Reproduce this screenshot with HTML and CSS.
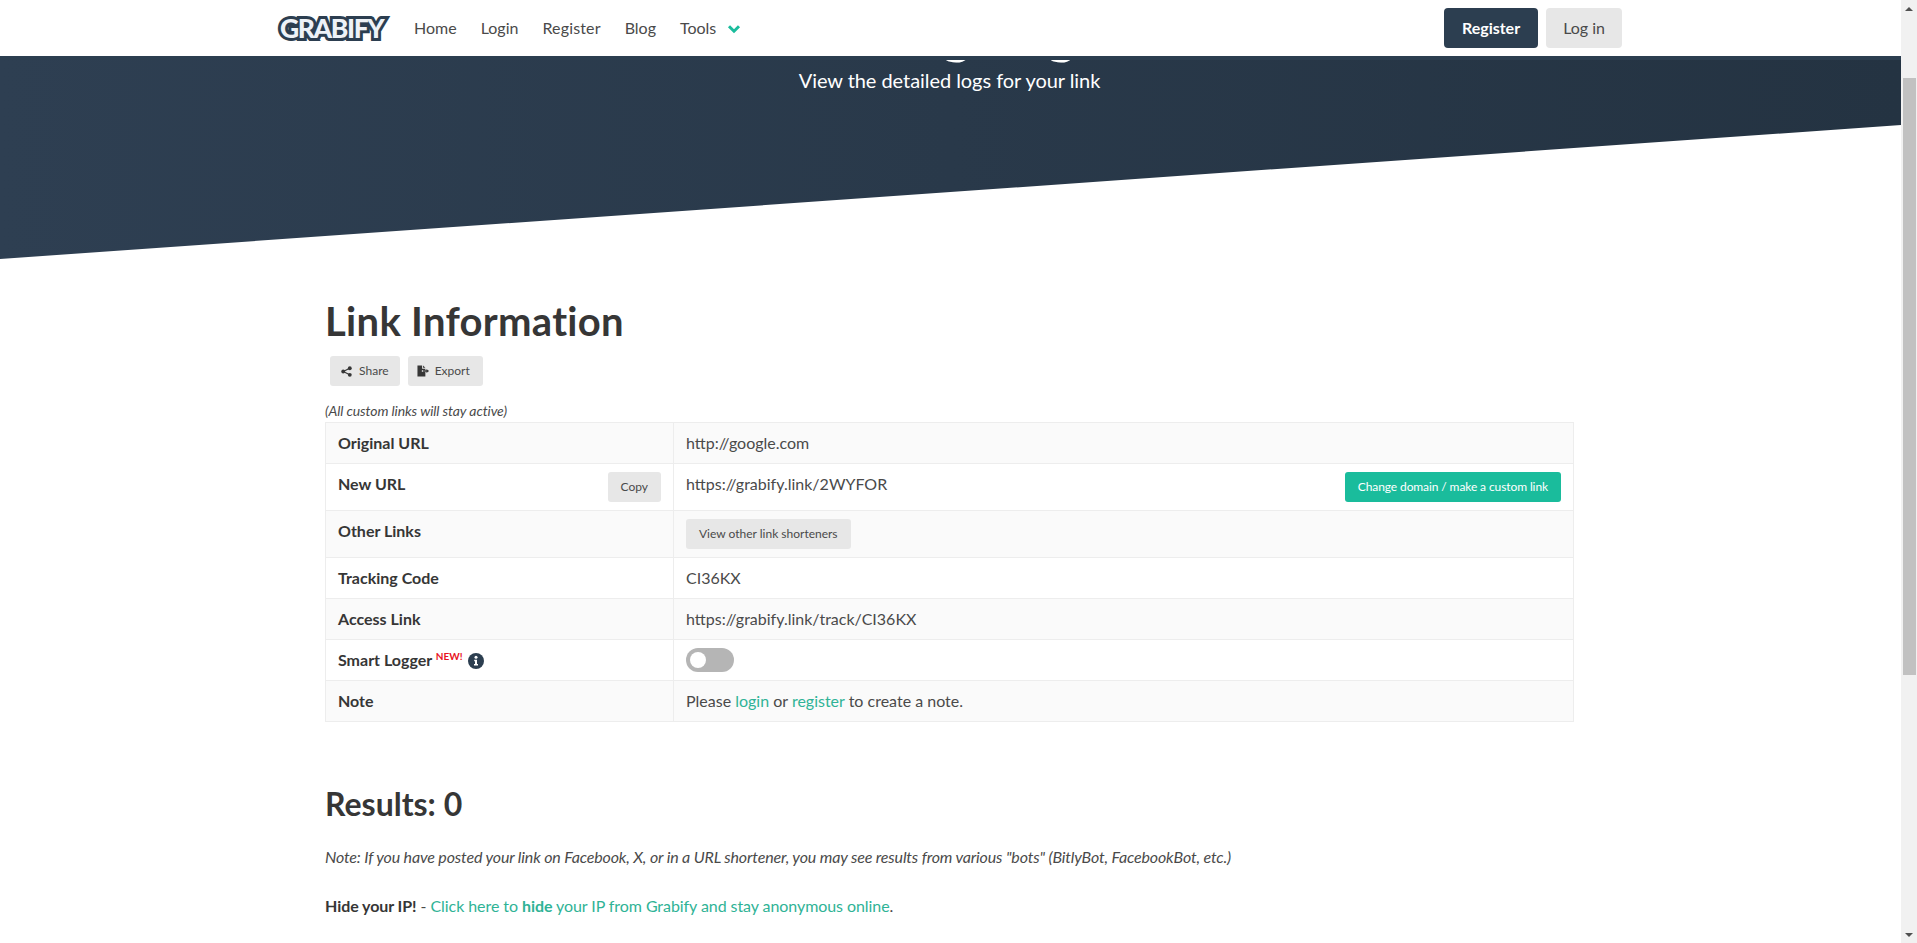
FILE: index.html
```html
<!DOCTYPE html>
<html lang="en">

<head>
    <meta charset="UTF-8">
    <title>Grabify - Link Information</title>
    <link rel="stylesheet" href="styles.css">
</head>

<body>
    <!-- top bar -->
    <nav class="navbar">
        <div class="navbar-inner">
            <a class="logo" href="#">GRABIFY</a>
            <a class="nav-link" href="#">Home</a>
            <a class="nav-link" href="#">Login</a>
            <a class="nav-link nav-link-wide" href="#">Register</a>
            <a class="nav-link" href="#">Blog</a>
            <a class="nav-link" href="#">Tools
                <svg class="chevron" viewBox="0 0 14 10" width="14" height="10">
                    <path d="M2 2.2 7 7.2 12 2.2" fill="none" stroke="#1abc9c" stroke-width="3" />
                </svg>
            </a>
            <div class="nav-buttons">
                <a class="btn-nav btn-dark" href="#">Register</a>
                <a class="btn-nav btn-light" href="#">Log in</a>
            </div>
        </div>
    </nav>

    <div class="page">
        <header class="hero">
            <h1 class="hero-title">Viewing Logs</h1>
            <p class="hero-sub">View the detailed logs for your link</p>
        </header>

        <main class="content">
            <h2 class="title">Link Information</h2>
            <div class="actions">
                <a class="btn-small" href="#">
                    <svg class="btn-icon" viewBox="0 0 12 12" width="11" height="11">
                        <circle cx="2.4" cy="6" r="2.1" />
                        <circle cx="9.6" cy="2.4" r="2.1" />
                        <circle cx="9.6" cy="9.6" r="2.1" />
                        <path d="M2.4 6 9.6 2.4M2.4 6 9.6 9.6" stroke="#363636" stroke-width="1.2" />
                    </svg>
                    Share
                </a>
                <a class="btn-small btn-export" href="#">
                    <svg class="btn-icon" viewBox="0 0 14 12" width="13" height="12">
                        <path d="M0.5 0H5.5V3.5H9V5.2H5.2V6.8H9V12H0.5Z" />
                        <path d="M6.5 0 9 2.6H6.5Z" />
                        <path d="M6.5 5.3H10.2V3.8L13 6 10.2 8.2V6.7H6.5Z" />
                    </svg>
                    Export
                </a>
            </div>
            <p class="note-small">(All custom links will stay active)</p>

            <table class="info-table">
                <tr>
                    <th>Original URL</th>
                    <td>http://google.com</td>
                </tr>
                <tr>
                    <th>New URL <a class="btn-small btn-right btn-copy" href="#">Copy</a></th>
                    <td>https://grabify.link/2WYFOR <a class="btn-small btn-green btn-right" href="#">Change domain / make a custom link</a></td>
                </tr>
                <tr>
                    <th>Other Links</th>
                    <td><a class="btn-small" href="#">View other link shorteners</a></td>
                </tr>
                <tr>
                    <th>Tracking Code</th>
                    <td>CI36KX</td>
                </tr>
                <tr>
                    <th>Access Link</th>
                    <td>https://grabify.link/track/CI36KX</td>
                </tr>
                <tr>
                    <th>
                        <span class="smart">Smart Logger <sup class="new">NEW!</sup>
                            <svg class="info" viewBox="0 0 16 16" width="16" height="16">
                                <circle cx="8" cy="8" r="8" fill="#2c3e50" />
                                <circle cx="8" cy="4.3" r="1.5" fill="#fff" />
                                <path d="M6.2 6.8H9V11H10V12.5H6V11H7V8.2H6.2Z" fill="#fff" />
                            </svg>
                        </span>
                    </th>
                    <td><span class="toggle"><span class="knob"></span></span></td>
                </tr>
                <tr>
                    <th>Note</th>
                    <td>Please <a class="link" href="#">login</a> or <a class="link" href="#">register</a> to create a note.</td>
                </tr>
            </table>

            <h3 class="results">Results: 0</h3>
            <p class="note-bots">Note: If you have posted your link on Facebook, X, or in a URL shortener, you may see results from various "bots" (BitlyBot, FacebookBot, etc.)</p>
            <p class="hide-ip"><strong>Hide your IP!</strong> - <a class="link" href="#">Click here to <strong>hide</strong> your IP from Grabify and stay anonymous online</a>.</p>
        </main>
    </div>

    <!-- browser scrollbar -->
    <aside class="scrollbar">
        <span class="arrow-up"></span>
        <span class="thumb"></span>
        <span class="arrow-down"></span>
    </aside>
</body>

</html>
```

FILE: styles.css
```css
* {
    box-sizing: border-box;
    margin: 0;
    padding: 0;
}

html,
body {
    height: 100%;
    overflow: hidden;
}

body {
    background: #fff;
    color: #4a4a4a;
    font-family: Lato, "Liberation Sans", sans-serif;
    font-size: 16px;
    line-height: 1.5;
}

a {
    text-decoration: none;
}

/* top bar */
.navbar {
    position: fixed;
    top: 0;
    left: 0;
    right: 16px;
    height: 60px;
    z-index: 10;
    background: #fff;
    border-bottom: 4px solid #2c3e50;
}

.navbar-inner {
    display: flex;
    align-items: center;
    width: 1345px;
    height: 56px;
    margin-left: 277px;
}

.logo {
    width: 112px;
    margin-right: 13px;
    padding-left: 3px;
    color: #eef2f7;
    font-size: 26.5px;
    font-weight: 900;
    letter-spacing: -1.4px;
    line-height: 24px;
    white-space: nowrap;
    -webkit-text-stroke: 6px #2c3e50;
    paint-order: stroke fill;
}

.nav-link {
    padding: 0 12px;
    color: #4a4a4a;
}

.nav-link-wide {
    letter-spacing: 0.15px;
}

.chevron {
    margin-left: 7px;
}

.nav-buttons {
    display: flex;
    gap: 8px;
    margin-left: auto;
}

.btn-nav {
    height: 40px;
    padding: 0 17px;
    border-radius: 4px;
    line-height: 40px;
}

.btn-dark {
    padding: 0 18px;
    background: #2c3e50;
    color: #fff;
    font-weight: 700;
}

.btn-light {
    background: #e7e7e7;
    color: #4a4a4a;
}

/* banner */
.page {
    padding-right: 16px;
}

.hero {
    height: 259px;
    background: linear-gradient(90deg, #2e3f52, #243342);
    clip-path: polygon(0 0, 100% 0, 100% 125px, 0 259px);
    color: #fff;
    text-align: center;
}

.hero-title {
    padding-right: 34px;
    font-size: 57px;
    font-weight: 700;
    line-height: 61px;
}

.hero-sub {
    margin-top: 4px;
    padding-right: 2px;
    font-size: 20px;
    letter-spacing: -0.05px;
    line-height: 30px;
}

/* main block */
.content {
    width: 1249px;
    margin-left: 325px;
    padding-top: 38px;
}

.title {
    color: #363636;
    font-size: 40px;
    font-weight: 700;
    letter-spacing: 0.3px;
    line-height: 48px;
}

.actions {
    display: flex;
    gap: 8px;
    margin: 11px 0 0 5px;
}

.btn-small {
    display: inline-block;
    height: 30px;
    padding: 0 13px;
    border-radius: 3px;
    background: #e7e7e7;
    color: #4a4a4a;
    font-size: 12px;
    font-weight: 400;
    line-height: 30px;
}

.btn-icon {
    margin-right: 4px;
    fill: #363636;
    vertical-align: -2px;
}

.actions .btn-small {
    padding: 0 11px;
}

.actions .btn-export {
    padding: 0 13px 0 9px;
}

.btn-export .btn-icon {
    margin-right: 2px;
}

.btn-right {
    float: right;
}

.btn-copy {
    padding: 0 13px;
}

.btn-green {
    background: #1abc9c;
    color: #fff;
    letter-spacing: -0.1px;
}

.note-small {
    margin: 14px 0 1px;
    font-size: 14px;
    font-style: italic;
    letter-spacing: -0.1px;
    line-height: 21px;
}

.info-table {
    width: 100%;
    border: 1px solid #ededed;
    border-collapse: collapse;
}

.info-table th,
.info-table td {
    padding: 8px 12px;
    border: 1px solid #ededed;
    line-height: 24px;
    text-align: left;
    vertical-align: top;
}

.info-table th {
    width: 348px;
    color: #363636;
    font-weight: 700;
}

.info-table tr:nth-child(odd) {
    background: #fafafa;
}

.smart {
    display: block;
    white-space: nowrap;
}

.new {
    color: #e8121e;
    font-size: 10px;
    line-height: 0;
}

.info {
    margin-left: 2px;
    vertical-align: -3px;
}

.toggle {
    display: block;
    width: 48px;
    height: 24px;
    padding: 4px;
    border-radius: 12px;
    background: #b5b5b5;
}

.knob {
    display: block;
    width: 16px;
    height: 16px;
    border-radius: 50%;
    background: #fff;
}

.link {
    color: #2fb396;
}

.results {
    margin-top: 62px;
    color: #363636;
    font-size: 32px;
    font-weight: 700;
    line-height: 40px;
}

.note-bots {
    margin-top: 21px;
    font-style: italic;
    letter-spacing: -0.15px;
}

.hide-ip {
    margin-top: 25px;
    letter-spacing: -0.07px;
}

.hide-ip strong {
    color: #363636;
}

.hide-ip a strong {
    color: inherit;
}

/* scrollbar drawn over the page edge */
.scrollbar {
    position: fixed;
    top: 0;
    right: 0;
    bottom: 0;
    z-index: 20;
    display: flex;
    flex-direction: column;
    align-items: center;
    width: 16px;
    background: #f1f1f1;
}

.arrow-up,
.arrow-down {
    width: 0;
    height: 0;
    border-left: 4px solid transparent;
    border-right: 4px solid transparent;
}

.arrow-up {
    margin-top: 7px;
    border-bottom: 4px solid #505050;
}

.arrow-down {
    margin-top: auto;
    margin-bottom: 6px;
    border-top: 4px solid #505050;
}

.thumb {
    width: 13px;
    height: 597px;
    margin-top: 67px;
    margin-left: 1px;
    background: #c1c1c1;
}
```
